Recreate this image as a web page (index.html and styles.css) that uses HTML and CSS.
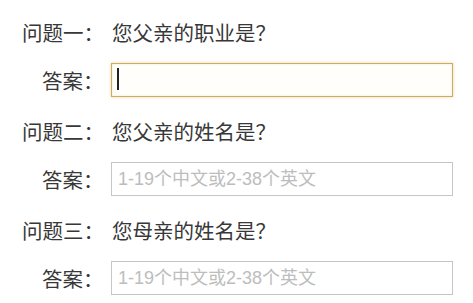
FILE: index.html
```html
<!DOCTYPE html>
<html lang="zh-CN">
<head>
<meta charset="utf-8">
<link rel="stylesheet" href="styles.css">
</head>
<body>
<form class="form">
  <div class="block">
    <div class="q"><span class="q-label">问题一：</span><span class="q-text">您父亲的职业是？</span></div>
    <div class="a"><span class="a-label">答案：</span><span class="field"><input class="inp focus" type="text"><span class="caret"></span></span></div>
  </div>
  <div class="block">
    <div class="q"><span class="q-label">问题二：</span><span class="q-text">您父亲的姓名是？</span></div>
    <div class="a"><span class="a-label">答案：</span><span class="field"><input class="inp" type="text" placeholder="1-19个中文或2-38个英文"></span></div>
  </div>
  <div class="block">
    <div class="q"><span class="q-label">问题三：</span><span class="q-text">您母亲的姓名是？</span></div>
    <div class="a"><span class="a-label">答案：</span><span class="field"><input class="inp" type="text" placeholder="1-19个中文或2-38个英文"></span></div>
  </div>
</form>
</body>
</html>
```

FILE: styles.css
```css
html, body {
  margin: 0;
  padding: 0;
  background: #fff;
}
body {
  font-family: "Noto Sans CJK SC", "Liberation Sans", sans-serif;
  color: #383838;
  font-size: 20.5px;
}
.form {
  margin: 0;
  padding-top: 17px;
}
.block {
  display: flex;
  flex-direction: column;
  gap: 16px;
  margin-bottom: 19px;
}
.q {
  display: flex;
  height: 30px;
  line-height: 30px;
  align-items: center;
}
.q-label {
  width: 112px;
  padding-left: 22px;
  box-sizing: border-box;
  flex: none;
}
.a {
  display: flex;
  align-items: center;
  height: 34px;
}
.a-label {
  width: 111px;
  padding-left: 42px;
  box-sizing: border-box;
  flex: none;
}
.field {
  position: relative;
  display: block;
  width: 342px;
  height: 34px;
}
.inp {
  display: block;
  width: 342px;
  height: 34px;
  box-sizing: border-box;
  margin: 0;
  border: 1px solid #c6c6c6;
  background: #fff;
  padding: 0 6px;
  font-family: "Liberation Sans", "Noto Sans CJK SC", sans-serif;
  font-size: 18px;
  color: #333;
  outline: none;
}
.inp::placeholder {
  color: #bdbdbd;
}
.inp.focus {
  border: 1px solid #cfab62;
  box-shadow: 0 0 3px rgba(214, 180, 100, 0.55), inset 0 0 2px rgba(230, 200, 130, 0.5);
  background: #fffefb;
}
.caret {
  position: absolute;
  left: 6px;
  top: 5px;
  width: 2px;
  height: 22px;
  background: #222;
}
```
